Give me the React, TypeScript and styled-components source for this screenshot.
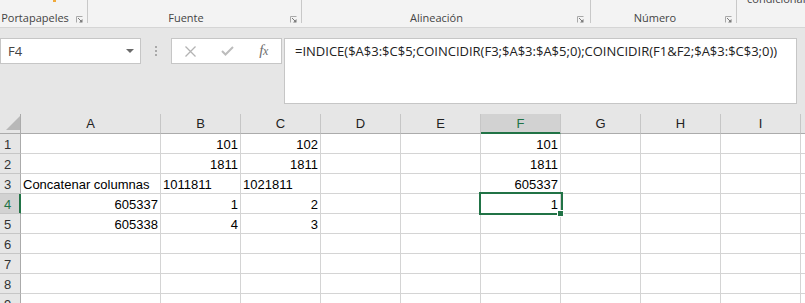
import React from 'react';
import styled, { createGlobalStyle } from 'styled-components';

const Global = createGlobalStyle`
  html, body { margin: 0; padding: 0; background: #e6e6e6; overflow: hidden; }
  body { width: 805px; height: 303px; font-family: "Open Sans", "Noto Sans", sans-serif; }
`;

const Page = styled.div`
  display: flex;
  flex-direction: column;
  width: 805px;
  height: 303px;
  overflow: hidden;
  background: #e6e6e6;
`;

/* ---------- Ribbon ---------- */
const Ribbon = styled.div`
  display: flex;
  align-items: flex-start;
  height: 27px;
  flex: 0 0 auto;
  background: #f3f3f3;
  border-bottom: 1px solid #d5d5d5;
  overflow: hidden;
`;

const Group = styled.div<{ $w?: number }>`
  position: relative;
  display: flex;
  align-items: flex-start;
  box-sizing: border-box;
  height: 23px;
  flex: ${(p) => (p.$w ? `0 0 ${p.$w}px` : '1 1 auto')};
  border-right: ${(p) => (p.$w ? '1px solid #c8c8c8' : 'none')};
`;

const GroupLabel = styled.div`
  flex: 1 1 auto;
  margin-top: 11px;
  text-align: center;
  font-size: 11px;
  line-height: 14px;
  color: #444;
  white-space: nowrap;
`;

const Launcher = styled.svg<{ $gap: number }>`
  flex: 0 0 7px;
  width: 7px;
  height: 7px;
  margin: 16px ${(p) => p.$gap}px 0 6px;
`;

const IconStub = styled.span`
  position: absolute;
  left: 53px;
  top: 0;
  width: 3px;
  height: 2px;
  background: #f0a93a;
`;

const CutText = styled.div`
  margin: -8px 0 0 10px;
  font-size: 11px;
  line-height: 14px;
  color: #444;
  white-space: nowrap;
`;

const LauncherIcon = ({ gap }: { gap: number }) => (
  <Launcher $gap={gap} viewBox="0 0 7 7">
    <path d="M0.5 6.5V0.5H6.5" fill="none" stroke="#a8a8a8" strokeWidth="1" />
    <path d="M2 2L5.5 5.5" stroke="#7a7a7a" strokeWidth="1" />
    <path d="M6.5 3V6.5H3Z" fill="#7a7a7a" />
  </Launcher>
);

/* ---------- Formula bar ---------- */
const FormulaArea = styled.div`
  display: flex;
  align-items: flex-start;
  flex: 0 0 auto;
  height: 86px;
  box-sizing: border-box;
  padding: 10px 8px 0 0;
`;

const NameBox = styled.div`
  flex: 0 0 141px;
  height: 26px;
  box-sizing: border-box;
  display: flex;
  align-items: center;
  justify-content: space-between;
  padding: 0 6px 0 7px;
  background: #fff;
  border: 1px solid #c6c6c6;
  font-size: 13px;
  color: #444;
`;

const Grip = styled.div`
  flex: 0 0 30px;
  height: 26px;
  display: flex;
  flex-direction: column;
  align-items: center;
  justify-content: center;
  gap: 2px;
`;

const GripDot = styled.span`
  width: 2px;
  height: 2px;
  background: #a9a9a9;
`;

const FuncBox = styled.div`
  flex: 0 0 111px;
  height: 26px;
  box-sizing: border-box;
  margin-right: 2px;
  display: grid;
  grid-template-columns: 37px 37px 35px;
  align-items: center;
  justify-items: center;
  background: #fff;
  border: 1px solid #c6c6c6;
`;

const Fx = styled.span`
  font-family: "Liberation Serif", "DejaVu Serif", serif;
  font-style: italic;
  font-size: 15px;
  line-height: 15px;
  color: #6e6e6e;
  letter-spacing: -0.5px;
`;

const FxSub = styled.span`
  font-size: 12px;
`;

const FormulaInput = styled.div`
  flex: 1 1 auto;
  height: 66px;
  box-sizing: border-box;
  padding: 4px 10px;
  background: #fff;
  border: 1px solid #c6c6c6;
  font-size: 13px;
  line-height: 16px;
  color: #222;
  white-space: nowrap;
  overflow: hidden;
`;

/* ---------- Sheet ---------- */
const Sheet = styled.div`
  display: grid;
  grid-template-columns: 21px 140px repeat(8, 80px) 1fr;
  grid-auto-rows: 20px;
  flex: 1 1 auto;
  overflow: hidden;
  background: #fff;
  font-family: "Liberation Sans", Arial, sans-serif;
  font-size: 13px;
  color: #000;
`;

const Corner = styled.div`
  box-sizing: border-box;
  display: flex;
  align-items: flex-end;
  justify-content: flex-end;
  padding: 0 0 3px 0;
  background: #e6e6e6;
  border-right: 1px solid #ababab;
  border-bottom: 1px solid #ababab;
`;

const Triangle = styled.div`
  width: 0;
  height: 0;
  border-left: 14px solid transparent;
  border-bottom: 14px solid #b8b8b8;
`;

const ColHeader = styled.div<{ $sel?: boolean }>`
  box-sizing: border-box;
  text-align: center;
  line-height: 19px;
  background: ${(p) => (p.$sel ? '#d2d2d2' : '#e6e6e6')};
  color: ${(p) => (p.$sel ? '#217346' : '#222')};
  border-right: 1px solid #c6c6c6;
  border-bottom: 1px solid ${(p) => (p.$sel ? '#217346' : '#ababab')};
  box-shadow: ${(p) => (p.$sel ? 'inset 0 -1px 0 #217346' : 'none')};
`;

const RowHeader = styled.div<{ $sel?: boolean }>`
  box-sizing: border-box;
  padding: 2px 0 0 4px;
  line-height: 17px;
  background: ${(p) => (p.$sel ? '#d2d2d2' : '#e6e6e6')};
  color: ${(p) => (p.$sel ? '#217346' : '#333')};
  border-right: 1px solid ${(p) => (p.$sel ? '#217346' : '#ababab')};
  border-bottom: 1px solid #c6c6c6;
  box-shadow: ${(p) => (p.$sel ? 'inset -1px 0 0 #217346' : 'none')};
`;

const Cell = styled.div<{ $align: 'left' | 'right' }>`
  position: relative;
  box-sizing: border-box;
  padding: 2px 2px 0 2px;
  line-height: 17px;
  text-align: ${(p) => p.$align};
  white-space: nowrap;
  border-right: 1px solid #d4d4d4;
  border-bottom: 1px solid #d4d4d4;
`;

const Selection = styled.div`
  position: absolute;
  left: -2px;
  top: -2px;
  width: 84px;
  height: 23px;
  box-sizing: border-box;
  border: 2px solid #217346;
  z-index: 2;
  pointer-events: none;
`;

const FillHandle = styled.div`
  position: absolute;
  right: -3px;
  bottom: -4px;
  width: 7px;
  height: 7px;
  box-sizing: border-box;
  background: #217346;
  border: 1px solid #fff;
`;

type CellData = { v: string; a?: 'left' | 'right' };

const columns = ['A', 'B', 'C', 'D', 'E', 'F', 'G', 'H', 'I', ''];
const data: Record<number, Record<string, CellData>> = {
  1: { B: { v: '101' }, C: { v: '102' }, F: { v: '101' } },
  2: { B: { v: '1811' }, C: { v: '1811' }, F: { v: '1811' } },
  3: {
    A: { v: 'Concatenar columnas', a: 'left' },
    B: { v: '1011811', a: 'left' },
    C: { v: '1021811', a: 'left' },
    F: { v: '605337' },
  },
  4: { A: { v: '605337' }, B: { v: '1' }, C: { v: '2' }, F: { v: '1' } },
  5: { A: { v: '605338' }, B: { v: '4' }, C: { v: '3' } },
};

const selCol = 'F';
const selRow = 4;
const rows = [1, 2, 3, 4, 5, 6, 7, 8, 9, 10];

export default function App() {
  return (
    <Page>
      <Global />
      <Ribbon>
        <Group $w={88}>
          <IconStub />
          <GroupLabel>Portapapeles</GroupLabel>
          <LauncherIcon gap={4} />
        </Group>
        <Group $w={214}>
          <GroupLabel>Fuente</GroupLabel>
          <LauncherIcon gap={4} />
        </Group>
        <Group $w={289}>
          <GroupLabel>Alineación</GroupLabel>
          <LauncherIcon gap={6} />
        </Group>
        <Group $w={146}>
          <GroupLabel>Número</GroupLabel>
          <LauncherIcon gap={4} />
        </Group>
        <Group>
          <CutText>condicional</CutText>
        </Group>
      </Ribbon>

      <FormulaArea>
        <NameBox>
          <span>F4</span>
          <svg width="8" height="4" viewBox="0 0 8 4">
            <path d="M0 0H8L4 4Z" fill="#6a6a6a" />
          </svg>
        </NameBox>
        <Grip>
          <GripDot />
          <GripDot />
          <GripDot />
        </Grip>
        <FuncBox>
          <svg width="11" height="11" viewBox="0 0 11 11">
            <path d="M0.5 0.5L10.5 10.5M10.5 0.5L0.5 10.5" stroke="#b3b3b3" strokeWidth="1.3" />
          </svg>
          <svg width="13" height="10" viewBox="0 0 13 10">
            <path d="M1 5L4.5 8.5L12 1" fill="none" stroke="#bcbcbc" strokeWidth="2" />
          </svg>
          <Fx>
            f<FxSub>x</FxSub>
          </Fx>
        </FuncBox>
        <FormulaInput>=INDICE($A$3:$C$5;COINCIDIR(F3;$A$3:$A$5;0);COINCIDIR(F1&amp;F2;$A$3:$C$3;0))</FormulaInput>
      </FormulaArea>

      <Sheet>
        <Corner>
          <Triangle />
        </Corner>
        {columns.map((c, i) => (
          <ColHeader key={`h${i}`} $sel={c === selCol}>
            {c}
          </ColHeader>
        ))}
        {rows.map((r) => (
          <React.Fragment key={r}>
            <RowHeader $sel={r === selRow}>{r}</RowHeader>
            {columns.map((c, i) => {
              const d = data[r]?.[c];
              const isSel = r === selRow && c === selCol;
              return (
                <Cell key={`${r}-${i}`} $align={d?.a ?? 'right'}>
                  {d?.v}
                  {isSel && (
                    <Selection>
                      <FillHandle />
                    </Selection>
                  )}
                </Cell>
              );
            })}
          </React.Fragment>
        ))}
      </Sheet>
    </Page>
  );
}
